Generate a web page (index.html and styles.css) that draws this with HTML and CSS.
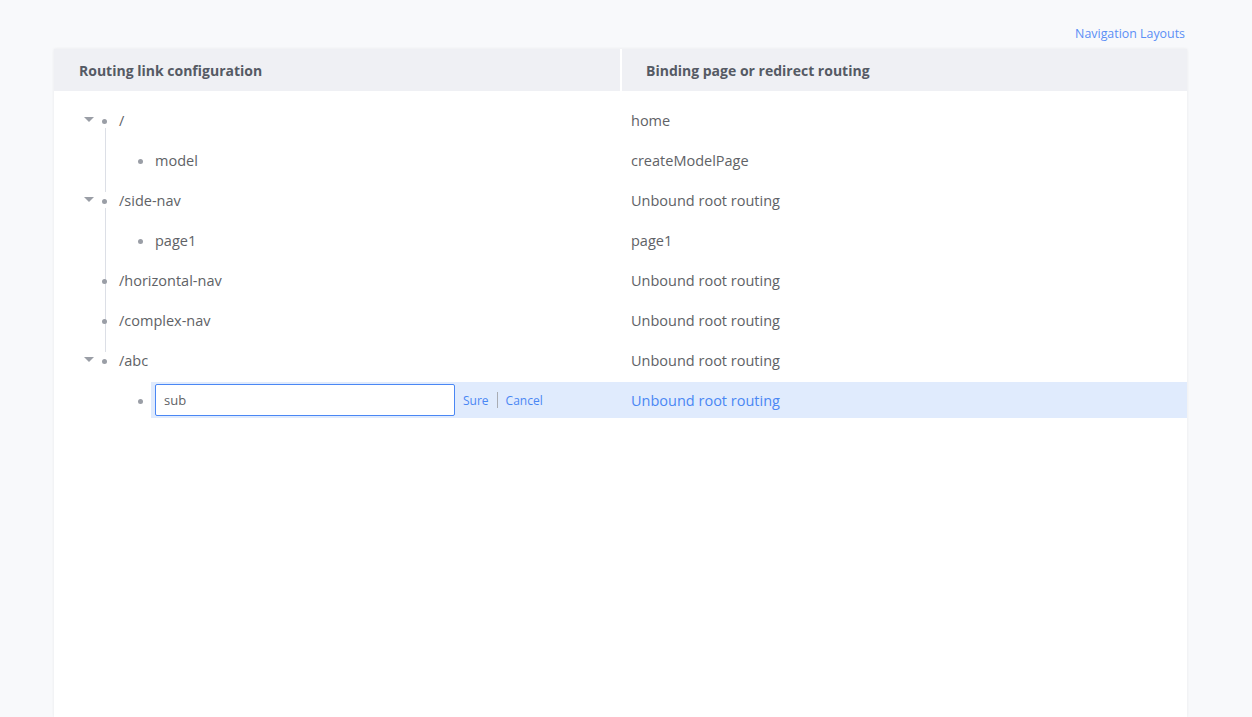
FILE: index.html
```html
<!DOCTYPE html>
<html lang="en">
<head>
<meta charset="utf-8">
<title>Routing</title>
<link rel="stylesheet" href="styles.css">
</head>
<body>
<div class="page">
  <div class="topbar"><a class="nav-link" href="#">Navigation Layouts</a></div>
  <div class="card">
    <div class="thead">
      <div class="th th-route">Routing link configuration</div>
      <div class="th th-bind">Binding page or redirect routing</div>
    </div>
    <div class="tbody">
      <div class="row ln-b">
        <span class="toggle"></span><span class="dotbox"><i class="dot"></i></span>
        <div class="body"><div class="label">/</div><div class="bind">home</div></div>
      </div>
      <div class="row child ln-f">
        <span class="toggle none"></span><span class="dotbox"><i class="dot"></i></span>
        <div class="body"><div class="label">model</div><div class="bind">createModelPage</div></div>
      </div>
      <div class="row ln-t ln-b">
        <span class="toggle"></span><span class="dotbox"><i class="dot"></i></span>
        <div class="body"><div class="label">/side-nav</div><div class="bind">Unbound root routing</div></div>
      </div>
      <div class="row child ln-f">
        <span class="toggle none"></span><span class="dotbox"><i class="dot"></i></span>
        <div class="body"><div class="label">page1</div><div class="bind">page1</div></div>
      </div>
      <div class="row ln-f">
        <span class="toggle none"></span><span class="dotbox"><i class="dot"></i></span>
        <div class="body"><div class="label">/horizontal-nav</div><div class="bind">Unbound root routing</div></div>
      </div>
      <div class="row ln-f">
        <span class="toggle none"></span><span class="dotbox"><i class="dot"></i></span>
        <div class="body"><div class="label">/complex-nav</div><div class="bind">Unbound root routing</div></div>
      </div>
      <div class="row ln-t">
        <span class="toggle"></span><span class="dotbox"><i class="dot"></i></span>
        <div class="body"><div class="label">/abc</div><div class="bind">Unbound root routing</div></div>
      </div>
      <div class="row child">
        <span class="toggle none"></span><span class="dotbox"><i class="dot"></i></span>
        <div class="body selected">
          <div class="label edit">
            <input class="name-input" type="text" value="sub">
            <a class="act" href="#">Sure</a><span class="sep"></span><a class="act" href="#">Cancel</a>
          </div>
          <div class="bind">Unbound root routing</div>
        </div>
      </div>
    </div>
  </div>
</div>
</body>
</html>
```

FILE: styles.css
```css
html, body {
  margin: 0;
  padding: 0;
  background: #f8f9fb;
  height: 100%;
  overflow: hidden;
}
body {
  font-family: "Open Sans", "Liberation Sans", Arial, sans-serif;
  color: #606266;
  font-size: 14px;
}
.page {
  padding-left: 54px;
  width: 1133px;
}
.topbar {
  height: 49px;
  display: flex;
  justify-content: flex-end;
  align-items: flex-start;
  box-sizing: border-box;
  padding-top: 26px;
  padding-right: 2px;
}
.nav-link {
  font-size: 12.4px;
  line-height: 16px;
  color: #5b8ff6;
  text-decoration: none;
}
.card {
  background: #fff;
  min-height: 668px;
  box-shadow: 0 0 3px rgba(0, 0, 0, 0.07);
}
.thead {
  display: grid;
  grid-template-columns: 566px 1fr;
  column-gap: 2px;
  background: #fff;
}
.th {
  height: 42px;
  background: #eff0f4;
  font-weight: bold;
  color: #555a64;
  font-size: 14px;
  display: flex;
  align-items: center;
}
.th-route { padding-left: 25px; }
.th-bind { padding-left: 24px; }
.tbody {
  padding-top: 9px;
}
.row {
  position: relative;
  height: 40px;
  display: flex;
  align-items: center;
  padding-left: 30px;
}
.row.child {
  padding-left: 66px;
}
.row.ln-t::before,
.row.ln-b::after,
.row.ln-f::before {
  content: "";
  position: absolute;
  left: 51px;
  width: 1px;
  background: #dcdfe6;
}
.row.ln-t::before { top: 0; height: 12px; }
.row.ln-b::after { top: 28px; height: 12px; }
.row.ln-f::before { top: 0; height: 40px; }
.toggle {
  width: 10px;
  height: 6px;
  flex: none;
  position: relative;
}
.toggle::before {
  content: "";
  position: absolute;
  left: 0;
  top: 0;
  border-left: 5px solid transparent;
  border-right: 5px solid transparent;
  border-top: 5px solid #9a9ea6;
}
.toggle.none::before { display: none; }
.dotbox {
  width: 21px;
  flex: none;
  display: flex;
  align-items: center;
  position: relative;
  z-index: 1;
}
.dot {
  display: block;
  width: 5px;
  height: 5px;
  border-radius: 50%;
  background: #9a9ea6;
  margin-left: 8px;
  margin-top: 2px;
}
.body {
  flex: 1;
  height: 36px;
  display: flex;
  align-items: center;
  font-size: 14.5px;
}
.body.selected {
  background: #e0ebfd;
}
.label {
  flex: 1;
  padding-left: 4px;
  white-space: nowrap;
}
.label.edit {
  display: flex;
  align-items: center;
}
.name-input {
  width: 300px;
  height: 32px;
  box-sizing: border-box;
  border: 1px solid #4a87f4;
  border-radius: 2px;
  padding: 0 8px;
  font-family: inherit;
  font-size: 13px;
  color: #606266;
  outline: none;
  background: #fff;
}
.act {
  font-size: 12px;
  color: #4a87f4;
  text-decoration: none;
}
.name-input + .act { margin-left: 8px; }
.sep {
  display: inline-block;
  width: 1px;
  height: 16px;
  background: #a9acb3;
  margin: 0 8px 0 8px;
}
.bind {
  width: 556px;
  flex: none;
  padding-left: 9px;
  white-space: nowrap;
}
.selected .bind {
  color: #4a87f4;
}
```
